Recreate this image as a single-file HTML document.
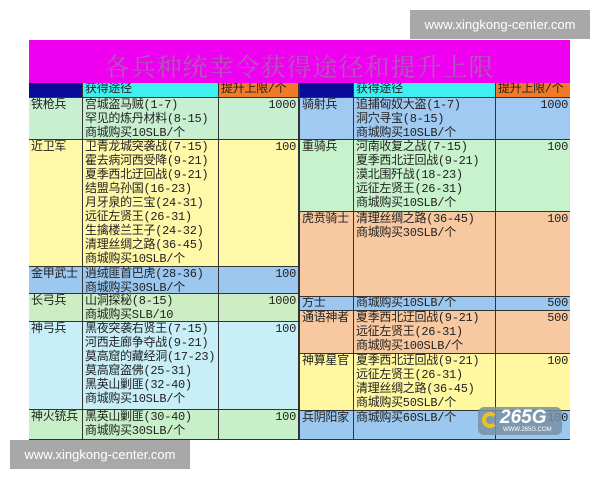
<!DOCTYPE html>
<html><head><meta charset="utf-8"><style>
body{margin:0;width:600px;height:480px;background:#fff;position:relative;overflow:hidden;font-family:"Liberation Serif","Noto Serif CJK SC","WenQuanYi Zen Hei",serif;}
.a{position:absolute;box-sizing:border-box;}
.c{position:absolute;box-sizing:border-box;border-right:1px solid #333;border-bottom:1px solid #333;font-size:12px;line-height:14px;color:#222;padding-left:2px;white-space:nowrap;overflow:hidden;font-family:"Liberation Mono","Noto Sans CJK SC",monospace;letter-spacing:-0.3px;}
.n{text-align:right;padding-right:2px;}
.wm{position:absolute;background:#a8a8a8;color:#fff;font-family:"Liberation Sans","DejaVu Sans",sans-serif;font-size:13px;line-height:29px;text-align:center;}
</style></head><body>
<div class="a" style="left:29px;top:40px;width:541px;height:43px;background:#f000f0;"></div>
<div class="a" style="left:29px;top:49px;width:541px;height:34px;text-align:center;font-size:25px;line-height:34px;color:#b058b8;letter-spacing:1px;font-family:'Noto Serif CJK SC',serif;">各兵种统幸令获得途径和提升上限</div>

<div class="c" style="left:29px;top:83px;width:54px;height:15px;background:#0a0a9a;"></div>
<div class="c" style="left:83px;top:83px;width:136px;height:15px;background:#3ef0ef;line-height:13px;">获得途径</div>
<div class="c" style="left:219px;top:83px;width:80px;height:15px;background:#f07a28;line-height:13px;">提升上限/个</div>
<div class="c" style="left:299px;top:83px;width:55px;height:15px;background:#0a0a9a;border-left:1px solid #333;"></div>
<div class="c" style="left:354px;top:83px;width:142px;height:15px;background:#3ef0ef;line-height:13px;">获得途径</div>
<div class="c" style="left:496px;top:83px;width:74px;height:15px;background:#f07a28;line-height:13px;border-right:none;">提升上限/个</div>

<div class="c" style="left:29px;top:98px;width:54px;height:42px;background:#c8f0d0;">铁枪兵</div>
<div class="c" style="left:83px;top:98px;width:136px;height:42px;background:#c8f0d0;">宫城盗马贼(1-7)<br>罕见的炼丹材料(8-15)<br>商城购买10SLB/个</div>
<div class="c n" style="left:219px;top:98px;width:80px;height:42px;background:#c8f0d0;">1000</div>

<div class="c" style="left:29px;top:140px;width:54px;height:127px;background:#fff8a8;">近卫军</div>
<div class="c" style="left:83px;top:140px;width:136px;height:127px;background:#fff8a8;">卫青龙城突袭战(7-15)<br>霍去病河西受降(9-21)<br>夏季西北迂回战(9-21)<br>结盟乌孙国(16-23)<br>月牙泉的三宝(24-31)<br>远征左贤王(26-31)<br>生擒楼兰王子(24-32)<br>清理丝绸之路(36-45)<br>商城购买10SLB/个</div>
<div class="c n" style="left:219px;top:140px;width:80px;height:127px;background:#fff8a8;">100</div>

<div class="c" style="left:29px;top:267px;width:54px;height:27px;background:#9cc8f0;">金甲武士</div>
<div class="c" style="left:83px;top:267px;width:136px;height:27px;background:#9cc8f0;">逍绒匪首巴虎(28-36)<br>商城购买30SLB/个</div>
<div class="c n" style="left:219px;top:267px;width:80px;height:27px;background:#9cc8f0;">100</div>

<div class="c" style="left:29px;top:294px;width:54px;height:28px;background:#cdeec4;">长弓兵</div>
<div class="c" style="left:83px;top:294px;width:136px;height:28px;background:#cdeec4;">山洞探秘(8-15)<br>商城购买SLB/10</div>
<div class="c n" style="left:219px;top:294px;width:80px;height:28px;background:#cdeec4;">1000</div>

<div class="c" style="left:29px;top:322px;width:54px;height:88px;background:#c8eef8;">神弓兵</div>
<div class="c" style="left:83px;top:322px;width:136px;height:88px;background:#c8eef8;">黑夜突袭右贤王(7-15)<br>河西走廊争夺战(9-21)<br>莫高窟的藏经洞(17-23)<br>莫高窟盗佛(25-31)<br>黑英山剿匪(32-40)<br>商城购买10SLB/个</div>
<div class="c n" style="left:219px;top:322px;width:80px;height:88px;background:#c8eef8;">100</div>

<div class="c" style="left:29px;top:410px;width:54px;height:30px;background:#c8f0c8;">神火铳兵</div>
<div class="c" style="left:83px;top:410px;width:136px;height:30px;background:#c8f0c8;">黑英山剿匪(30-40)<br>商城购买30SLB/个</div>
<div class="c n" style="left:219px;top:410px;width:80px;height:30px;background:#c8f0c8;">100</div>

<div class="c" style="left:299px;top:98px;width:55px;height:42px;background:#a0caf2;border-left:1px solid #333;">骑射兵</div>
<div class="c" style="left:354px;top:98px;width:142px;height:42px;background:#a0caf2;">追捕匈奴大盗(1-7)<br>洞穴寻宝(8-15)<br>商城购买10SLB/个</div>
<div class="c n" style="left:496px;top:98px;width:74px;height:42px;background:#a0caf2;border-right:none;">1000</div>

<div class="c" style="left:299px;top:140px;width:55px;height:72px;background:#c8f2cc;border-left:1px solid #333;">重骑兵</div>
<div class="c" style="left:354px;top:140px;width:142px;height:72px;background:#c8f2cc;">河南收复之战(7-15)<br>夏季西北迂回战(9-21)<br>漠北围歼战(18-23)<br>远征左贤王(26-31)<br>商城购买10SLB/个</div>
<div class="c n" style="left:496px;top:140px;width:74px;height:72px;background:#c8f2cc;border-right:none;">100</div>

<div class="c" style="left:299px;top:212px;width:55px;height:85px;background:#f8c8a0;border-left:1px solid #333;">虎贲骑士</div>
<div class="c" style="left:354px;top:212px;width:142px;height:85px;background:#f8c8a0;">清理丝绸之路(36-45)<br>商城购买30SLB/个</div>
<div class="c n" style="left:496px;top:212px;width:74px;height:85px;background:#f8c8a0;border-right:none;">100</div>

<div class="c" style="left:299px;top:297px;width:55px;height:14px;background:#9cc8f0;border-left:1px solid #333;line-height:13px;">方士</div>
<div class="c" style="left:354px;top:297px;width:142px;height:14px;background:#9cc8f0;line-height:13px;">商城购买10SLB/个</div>
<div class="c n" style="left:496px;top:297px;width:74px;height:14px;background:#9cc8f0;border-right:none;line-height:13px;">500</div>

<div class="c" style="left:299px;top:311px;width:55px;height:43px;background:#f8c8a0;border-left:1px solid #333;">通语神者</div>
<div class="c" style="left:354px;top:311px;width:142px;height:43px;background:#f8c8a0;">夏季西北迂回战(9-21)<br>远征左贤王(26-31)<br>商城购买100SLB/个</div>
<div class="c n" style="left:496px;top:311px;width:74px;height:43px;background:#f8c8a0;border-right:none;">500</div>

<div class="c" style="left:299px;top:354px;width:55px;height:57px;background:#fff8a0;border-left:1px solid #333;">神算星官</div>
<div class="c" style="left:354px;top:354px;width:142px;height:57px;background:#fff8a0;">夏季西北迂回战(9-21)<br>远征左贤王(26-31)<br>清理丝绸之路(36-45)<br>商城购买50SLB/个</div>
<div class="c n" style="left:496px;top:354px;width:74px;height:57px;background:#fff8a0;border-right:none;">100</div>

<div class="c" style="left:299px;top:411px;width:55px;height:29px;background:#9cc8f0;border-left:1px solid #333;">兵阴阳家</div>
<div class="c" style="left:354px;top:411px;width:142px;height:29px;background:#9cc8f0;">商城购买60SLB/个</div>
<div class="c n" style="left:496px;top:411px;width:74px;height:29px;background:#9cc8f0;border-right:none;">100</div>

<div class="a" style="left:478px;top:407px;width:84px;height:28px;background:#7890a4;border-radius:6px;opacity:.85;"></div>
<div class="a" style="left:482px;top:412px;width:16px;height:16px;border-radius:50%;border:4px solid #f0c020;border-right-color:transparent;"></div>
<div class="a" style="left:500px;top:407px;font-family:'Liberation Sans',sans-serif;font-weight:bold;font-style:italic;font-size:19px;color:#fff;line-height:22px;">265G</div>
<div class="a" style="left:503px;top:427px;font-family:'Liberation Sans',sans-serif;font-size:6px;color:#fff;">WWW.265G.COM</div>

<div class="wm" style="left:410px;top:10px;width:180px;height:29px;">www.xingkong-center.com</div>
<div class="wm" style="left:10px;top:440px;width:180px;height:29px;">www.xingkong-center.com</div>
</body></html>
